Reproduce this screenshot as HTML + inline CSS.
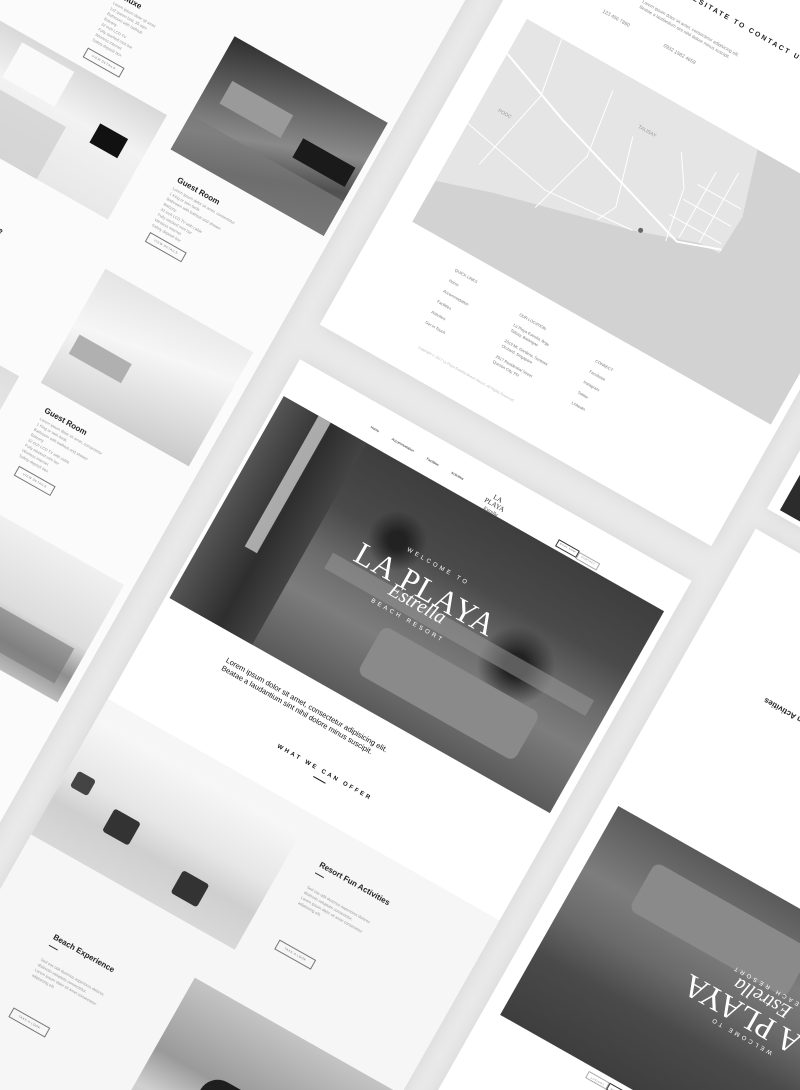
<!DOCTYPE html>
<html><head><meta charset="utf-8">
<style>
html,body{margin:0;padding:0;width:800px;height:1090px;overflow:hidden;background:#e9e9e9;font-family:"Liberation Sans",sans-serif;}
#clip{position:fixed;left:0;top:0;width:800px;height:1090px;overflow:hidden;background:#e9e9e9;}
#w{position:absolute;left:0;top:0;width:10px;height:10px;transform-origin:0 0;transform:rotate(29.5deg);}
.pg{position:absolute;background:#fff;box-shadow:0 0 18px rgba(0,0,0,.08);}
.a{position:absolute;}
.t{position:absolute;font-size:4px;line-height:6px;color:#9a9a9a;white-space:nowrap;}
.h{position:absolute;font-size:8px;font-weight:bold;color:#222;white-space:nowrap;}
.btn{position:absolute;border:0.8px solid #777;font-size:3px;color:#777;text-align:center;line-height:9px;width:40px;height:9px;letter-spacing:.5px;}
.ph{position:absolute;overflow:hidden;}
</style></head><body>
<div id="clip">
<div id="w">

<!-- Column A -->
<div class="pg" style="left:-320px;top:-620px;width:725px;height:1700px;background:#fbfbfb"></div>
<div class="h" style="left:100px;top:-68px">Deluxe</div>
<div class="t" style="left:100px;top:-56px">Lorem ipsum dolor sit amet<br>1x2 queen bed, 35 sqm<br>Bathroom with bathtub<br>Balcony<br>32 inch LCD TV<br>Fully stocked mini bar<br>Wireless internet<br>Safety deposit box</div>
<div class="btn" style="left:100px;top:-2px">VIEW DETAILS</div>
<div class="ph" style="left:222px;top:-84px;width:176px;height:130px;background:linear-gradient(160deg,#2e2e2e 0%,#6a6a6a 35%,#8a8a8a 55%,#505050 75%,#707070 100%)">
 <div class="a" style="left:110px;top:55px;width:60px;height:22px;background:#1a1a1a"></div>
 <div class="a" style="left:20px;top:40px;width:70px;height:26px;background:#9a9a9a"></div>
 <div class="a" style="left:0;top:90px;width:176px;height:40px;background:#7a7a7a;opacity:.7"></div>
</div>
<div class="ph" style="left:-120px;top:18px;width:322px;height:120px;background:linear-gradient(180deg,#d9d9d9,#f2f2f2 40%,#e8e8e8)">
 <div class="a" style="left:268px;top:40px;width:32px;height:22px;background:#111"></div>
 <div class="a" style="left:160px;top:8px;width:60px;height:40px;background:#fafafa"></div>
 <div class="a" style="left:150px;top:60px;width:90px;height:60px;background:#c8c8c8;opacity:.6"></div>
</div>
<div class="h" style="left:243px;top:64px">Guest Room</div>
<div class="t" style="left:243px;top:76px">Lorem ipsum dolor sit amet, consectetur<br>1 King or twin beds<br>Bathroom with bathtub and shower<br>Balcony<br>32 inch LCD TV with cable<br>Fully stocked mini bar<br>Wireless internet<br>Safety deposit box</div>
<div class="btn" style="left:245px;top:128px">VIEW DETAILS</div>
<div class="h" style="left:70px;top:196px">Junior Suite</div>
<div class="t" style="left:70px;top:208px">Lorem ipsum dolor sit amet<br>2 queen beds<br>Bathroom with shower and tub</div>
<div class="ph" style="left:224px;top:182px;width:170px;height:131px;background:linear-gradient(170deg,#e4e4e4,#f6f6f6 40%,#dcdcdc 75%,#c9c9c9)">
 <div class="a" style="left:10px;top:70px;width:60px;height:22px;background:#b0b0b0"></div>
</div>
<div class="ph" style="left:-120px;top:318px;width:322px;height:122px;background:linear-gradient(180deg,#dedede,#f3f3f3)"></div>
<div class="h" style="left:241px;top:330px">Guest Room</div>
<div class="t" style="left:241px;top:342px">Lorem ipsum dolor sit amet, consectetur<br>1 King or twin beds<br>Bathroom with bathtub and shower<br>Balcony<br>32 inch LCD TV with cable<br>Fully stocked mini bar<br>Wireless internet<br>Safety deposit box</div>
<div class="btn" style="left:246px;top:396px">VIEW DETAILS</div>
<div class="ph" style="left:224px;top:448px;width:172px;height:135px;background:linear-gradient(180deg,#f0f0f0,#dcdcdc 55%,#8f8f8f 80%,#bdbdbd)">
 <div class="a" style="left:20px;top:60px;width:22px;height:16px;background:#555"></div>
 <div class="a" style="left:60px;top:80px;width:100px;height:40px;background:#777;opacity:.6"></div>
</div>

<!-- Column B: map page -->
<div class="pg" style="left:438px;top:-620px;width:450px;height:745px"></div>
<div class="t" style="left:560px;top:-345px;font-size:7px;font-weight:bold;color:#222;letter-spacing:2px">DON'T HESITATE TO CONTACT US</div>
<div class="t" style="left:560px;top:-318px;font-size:4.5px;color:#888">Lorem ipsum dolor sit amet, consectetur adipisicing elit.<br>Beatae a laudantium sint nihil dolore minus suscipit.</div>
<div class="t" style="left:530px;top:-290px;font-size:5px;color:#888">123 456 7890</div>
<div class="t" style="left:600px;top:-290px;font-size:5px;color:#888">0932 1582 4659</div>
<div class="ph" style="left:468px;top:-243px;width:412px;height:233px;background:#d2d2d2">
 <svg width="412" height="233" style="position:absolute;left:0;top:0">
  <polygon points="0,0 265,0 285,66 283,109 261,110 196,132 130,149 56,168 0,186" fill="#e5e5e5"/>
  <g stroke="#fff" fill="none" stroke-width="1">
   <polyline points="0,40 80,70 160,95 240,120 283,105" stroke-width="2"/>
   <polyline points="40,0 50,60 30,150"/>
   <polyline points="110,20 120,90 100,160"/>
   <polyline points="150,50 170,120 160,140"/>
   <polyline points="200,40 220,70 230,125"/>
   <polyline points="230,60 280,60"/>
   <polyline points="225,80 280,80"/>
   <polyline points="220,100 280,100"/>
   <polyline points="240,40 240,115"/>
   <polyline points="260,30 260,110"/>
   <polyline points="0,120 100,140 196,132"/>
  </g>
  <text x="150" y="40" font-size="5" fill="#999" font-family="Liberation Sans">TALISAY</text>
  <text x="20" y="95" font-size="5" fill="#999" font-family="Liberation Sans">POOC</text>
  <circle cx="203" cy="128" r="2.5" fill="#666"/>
 </svg>
</div>
<div class="t" style="left:529px;top:8px;color:#777;font-size:4px">QUICK LINKS<br><br>Home<br><br>Accommodation<br><br>Facilities<br><br>Activities<br><br>Get in Touch</div>
<div class="t" style="left:607px;top:15px;color:#777;font-size:4px">OUR LOCATION<br><br>La Playa Estrella, Brgy.<br>Talisay, Batangas<br><br>2019 Mt. Gardens, Sentosa<br>Orchard, Singapore<br><br>2017 Residential Street<br>Quezon City, PH</div>
<div class="t" style="left:696px;top:18px;color:#777;font-size:4px">CONNECT<br><br>Facebook<br><br>Instagram<br><br>Twitter<br><br>Linkedin</div>
<div class="t" style="left:535px;top:93px;color:#bbb;font-size:3.5px">Copyright © 2017 La Playa Estrella Beach Resort. All Rights Reserved.</div>

<!-- Column B: main page -->
<div class="pg" style="left:438px;top:165px;width:450px;height:1000px"></div>
<div class="a" style="left:438px;top:555px;width:450px;height:610px;background:#f6f6f6"></div>
<div class="t" style="left:533px;top:186px;font-size:3.5px;color:#222;word-spacing:14px">Home Accommodation Facilities Activities</div>
<div class="a" style="left:668px;top:186px;font-family:'Liberation Serif',serif;font-size:7px;color:#333;line-height:7px;text-align:center">LA PLAYA<br><i style="font-size:5px">Estrella</i></div>
<div class="btn" style="left:752px;top:194px;width:22px;height:6px;line-height:6px;font-size:2.5px;border-color:#333">BOOK NOW</div>
<div class="btn" style="left:776px;top:195px;width:22px;height:6px;line-height:6px;font-size:2.5px;border-color:#aaa">CONTACT</div>
<div class="ph" style="left:442px;top:205px;width:437px;height:232px;background:linear-gradient(180deg,#3e3e3e 0%,#4a4a4a 30%,#6a6a6a 50%,#7d7d7d 70%,#5a5a5a 100%)">
 <div class="a" style="left:0;top:0;width:95px;height:232px;background:linear-gradient(90deg,#555,#2e2e2e 60%,#444)"></div>
 <div class="a" style="left:40px;top:0;width:14px;height:150px;background:#c9c9c9;opacity:.8"></div>
 <div class="a" style="left:140px;top:35px;width:60px;height:70px;background:radial-gradient(circle,#222 20%,transparent 65%)"></div>
 <div class="a" style="left:290px;top:80px;width:90px;height:80px;background:radial-gradient(circle,#222 20%,transparent 65%)"></div>
 <div class="a" style="left:200px;top:150px;width:180px;height:55px;background:#8a8a8a;border-radius:8px"></div>
 <div class="a" style="left:120px;top:112px;width:300px;height:18px;background:#9a9a9a;opacity:.5"></div>
 <div class="a" style="left:0;top:70px;width:437px;text-align:center;color:#fff;font-size:6px;letter-spacing:3px">WELCOME TO</div>
 <div class="a" style="left:0;top:80px;width:437px;text-align:center;color:#fff;font-family:'Liberation Serif',serif;font-size:32px;letter-spacing:1px">LA PLAYA</div>
 <div class="a" style="left:0;top:104px;width:437px;text-align:center;color:#fff;font-family:'Liberation Serif',serif;font-style:italic;font-size:20px">Estrella</div>
 <div class="a" style="left:0;top:132px;width:437px;text-align:center;color:#fff;font-size:6px;letter-spacing:3px">BEACH RESORT</div>
</div>
<div class="a" style="left:522px;top:458px;font-size:7.5px;line-height:9px;color:#111;width:190px">Lorem ipsum dolor sit amet, consectetur adipisicing elit. Beatae a laudantium sint nihil dolore minus suscipit.</div>
<div class="a" style="left:438px;top:510px;width:450px;text-align:center;font-size:6px;font-weight:bold;letter-spacing:2.5px;color:#111">WHAT WE CAN OFFER</div>
<div class="a" style="left:655px;top:521px;width:14px;height:1px;background:#111"></div>
<div class="ph" style="left:438px;top:577px;width:234px;height:134px;background:linear-gradient(180deg,#f7f7f7,#e6e6e6 45%,#cfcfcf 70%,#d8d8d8)">
 <div class="a" style="left:60px;top:70px;width:30px;height:26px;background:#333;border-radius:3px"></div>
 <div class="a" style="left:150px;top:90px;width:30px;height:26px;background:#333;border-radius:3px"></div>
 <div class="a" style="left:10px;top:55px;width:20px;height:18px;background:#444;border-radius:3px"></div>
</div>
<div class="h" style="left:704px;top:590px">Resort Fun Activities</div>
<div class="a" style="left:704px;top:604px;width:10px;height:1px;background:#333"></div>
<div class="t" style="left:704px;top:618px;font-size:4px">Sed cos odit ducimus asperiores dolores<br>distinctio voluptate consectetur.<br>Lorem ipsum dolor sit amet consectetur<br>adipisicing elit.</div>
<div class="btn" style="left:706px;top:680px">TAKE A LOOK</div>
<div class="h" style="left:508px;top:784px">Beach Experience</div>
<div class="a" style="left:508px;top:798px;width:10px;height:1px;background:#333"></div>
<div class="t" style="left:508px;top:812px;font-size:4px">Sed cos odit ducimus asperiores dolores<br>distinctio voluptate consectetur.<br>Lorem ipsum dolor sit amet consectetur<br>adipisicing elit.</div>
<div class="btn" style="left:508px;top:870px">TAKE A LOOK</div>
<div class="ph" style="left:651px;top:755px;width:235px;height:200px;background:linear-gradient(180deg,#c4c4c4,#9a9a9a 40%,#d0d0d0 60%,#bdbdbd)">
 <div class="a" style="left:60px;top:75px;width:140px;height:40px;background:#1e1e1e;border-radius:20px 20px 4px 4px"></div>
</div>

<!-- Column C -->
<div class="pg" style="left:918px;top:-620px;width:460px;height:685px"></div>
<div class="ph" style="left:930px;top:-25px;width:220px;height:85px;background:#2c2c2c"></div>
<div class="pg" style="left:918px;top:88px;width:460px;height:1000px"></div>
<div class="h" style="left:1010px;top:228px;transform:rotate(180deg)">Resort Fun Activities</div>
<div class="ph" style="left:935px;top:397px;width:440px;height:240px;background:linear-gradient(0deg,#3e3e3e 0%,#4a4a4a 30%,#6a6a6a 50%,#7d7d7d 70%,#5a5a5a 100%)">
 <div class="a" style="left:60px;top:30px;width:180px;height:55px;background:#8a8a8a;border-radius:8px"></div>
 <div class="a" style="left:345px;top:0;width:95px;height:240px;background:linear-gradient(90deg,#444,#2e2e2e 40%,#555)"></div>
 <div class="a" style="left:0;top:80px;width:440px;transform:rotate(180deg);text-align:center;color:#fff;">
  <div style="font-size:6px;letter-spacing:3px">WELCOME TO</div>
  <div style="font-family:'Liberation Serif',serif;font-size:32px;line-height:30px">LA PLAYA</div>
  <div style="font-family:'Liberation Serif',serif;font-style:italic;font-size:20px;line-height:20px">Estrella</div>
  <div style="font-size:6px;letter-spacing:3px">BEACH RESORT</div>
 </div>
</div>
<div class="btn" style="left:1040px;top:642px;width:22px;height:6px;line-height:6px;font-size:2.5px;border-color:#aaa;transform:rotate(180deg)">CONTACT</div>
<div class="btn" style="left:1064px;top:642px;width:22px;height:6px;line-height:6px;font-size:2.5px;border-color:#333;transform:rotate(180deg)">BOOK NOW</div>

</div>
</div>
</body></html>
